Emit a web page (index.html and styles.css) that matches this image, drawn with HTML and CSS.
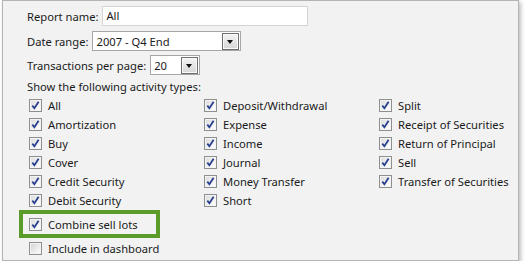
FILE: index.html
```html
<!DOCTYPE html>
<html lang="en">
<head>
    <meta charset="UTF-8">
    <title>Report settings</title>
    <link rel="stylesheet" href="styles.css">
</head>
<body>
    <div class="panel">
        <!-- Поля отчёта -->
        <div class="field">
            <span class="label">Report name:</span>
            <span class="text-box name-box">All</span>
        </div>
        <div class="field">
            <span class="label">Date range:</span>
            <span class="select date-select">2007 - Q4 End<span class="select-btn"></span></span>
        </div>
        <div class="field">
            <span class="label">Transactions per page:</span>
            <span class="select page-select">20<span class="select-btn"></span></span>
        </div>

        <div class="caption">Show the following activity types:</div>

        <div class="types">
            <div class="item"><span class="check on"></span>All</div>
            <div class="item"><span class="check on"></span>Amortization</div>
            <div class="item"><span class="check on"></span>Buy</div>
            <div class="item"><span class="check on"></span>Cover</div>
            <div class="item"><span class="check on"></span>Credit Security</div>
            <div class="item"><span class="check on"></span>Debit Security</div>

            <div class="item"><span class="check on"></span>Deposit/Withdrawal</div>
            <div class="item"><span class="check on"></span>Expense</div>
            <div class="item"><span class="check on"></span>Income</div>
            <div class="item"><span class="check on"></span>Journal</div>
            <div class="item"><span class="check on"></span>Money Transfer</div>
            <div class="item"><span class="check on"></span>Short</div>

            <div class="item"><span class="check on"></span>Split</div>
            <div class="item"><span class="check on"></span>Receipt of Securities</div>
            <div class="item"><span class="check on"></span>Return of Principal</div>
            <div class="item"><span class="check on"></span>Sell</div>
            <div class="item"><span class="check on"></span>Transfer of Securities</div>
        </div>

        <div class="highlight">
            <div class="item"><span class="check on"></span>Combine sell lots</div>
        </div>
        <div class="item extra"><span class="check"></span>Include in dashboard</div>
    </div>
</body>
</html>
```

FILE: styles.css
```css
/* Общие стили */
body {
    margin: 0;
    background: #fff;
    font-family: 'Noto Sans', sans-serif;
    font-size: 11.2px;
    color: #1a1a1a;
}

.panel {
    box-sizing: border-box;
    width: 517px;
    height: 261px;
    margin-left: 2px;
    padding: 5px 0 0 24px;
    background: #f2f2f2;
    border: 1px solid #b4b4b4;
    box-shadow: 2px 2px 4px rgba(0, 0, 0, 0.25);
}

/* Строки с полями */
.field {
    display: flex;
    align-items: center;
    height: 20px;
    margin-bottom: 5px;
}

.field:nth-child(2) {
    margin-bottom: 4px;
}

.field:nth-child(3) {
    margin-bottom: 0;
}

.label {
    margin-right: 4px;
}

.text-box {
    box-sizing: border-box;
    height: 20px;
    padding-left: 3px;
    line-height: 18px;
    background: #fff;
    border: 1px solid #d4d4d4;
}

.name-box {
    width: 206px;
}

.select {
    box-sizing: border-box;
    display: flex;
    align-items: center;
    justify-content: space-between;
    height: 20px;
    padding: 1px 1px 1px 3px;
    background: #fff;
    border: 1px solid #a6a6a6;
}

.date-select { width: 149px; }
.page-select { width: 50px; }

.select-btn {
    box-sizing: border-box;
    position: relative;
    width: 17px;
    height: 17px;
    border: 1px solid #6e6e6e;
    background: linear-gradient(#f4f4f4, #d6d6d6);
    box-shadow: inset 0 0 0 1px #fafafa;
}

/* Треугольник стрелки */
.select-btn::after {
    content: "";
    position: absolute;
    left: 4px;
    top: 6px;
    border-left: 3.5px solid transparent;
    border-right: 3.5px solid transparent;
    border-top: 4px solid #111;
}

.caption {
    height: 19px;
    line-height: 19px;
    margin-top: 2px;
}

/* Чекбоксы */
.types {
    display: grid;
    grid-template-columns: 175px 175px 175px;
    grid-template-rows: repeat(6, 19px);
    grid-auto-flow: column;
    margin-left: 2px;
}

.item {
    display: flex;
    align-items: center;
    height: 19px;
}

.check {
    box-sizing: border-box;
    width: 13px;
    height: 13px;
    margin-right: 6px;
    flex-shrink: 0;
    border: 1px solid #8e8f8f;
    background: linear-gradient(135deg, #cfcfcf, #f7f7f7 80%);
    box-shadow: inset 0 0 0 1px #f4f4f4;
}

.check.on {
    background-image:
        url("data:image/svg+xml,%3Csvg xmlns='http://www.w3.org/2000/svg' width='11' height='11'%3E%3Cpath d='M2.3 5.6L4.4 8.2L8.6 1.8' fill='none' stroke='%23273f8e' stroke-width='1.8'/%3E%3C/svg%3E"),
        linear-gradient(135deg, #d9d9d9, #fbfbfb 80%);
    background-repeat: no-repeat;
    background-position: 0 0;
}

.highlight {
    box-sizing: border-box;
    width: 141px;
    height: 28px;
    margin-left: -8px;
    padding: 0 0 0 6px;
    display: flex;
    align-items: center;
    border: 4px solid #5b9b2a;
}

.extra {
    margin: 1px 0 0 2px;
}
```
